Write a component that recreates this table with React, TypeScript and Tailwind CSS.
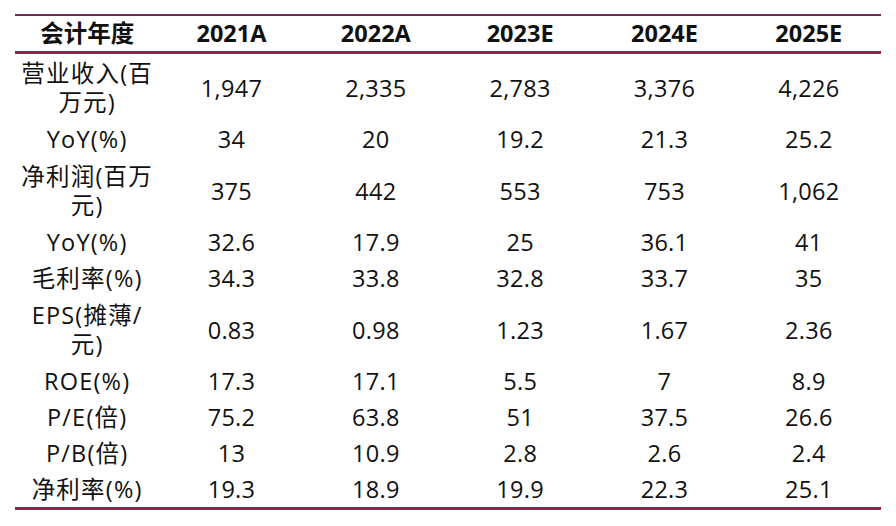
const header = ['会计年度', '2021A', '2022A', '2023E', '2024E', '2025E'];

const rows: { label: string[]; values: string[] }[] = [
  { label: ['营业收入(百', '万元)'], values: ['1,947', '2,335', '2,783', '3,376', '4,226'] },
  { label: ['YoY(%)'], values: ['34', '20', '19.2', '21.3', '25.2'] },
  { label: ['净利润(百万', '元)'], values: ['375', '442', '553', '753', '1,062'] },
  { label: ['YoY(%)'], values: ['32.6', '17.9', '25', '36.1', '41'] },
  { label: ['毛利率(%)'], values: ['34.3', '33.8', '32.8', '33.7', '35'] },
  { label: ['EPS(摊薄/', '元)'], values: ['0.83', '0.98', '1.23', '1.67', '2.36'] },
  { label: ['ROE(%)'], values: ['17.3', '17.1', '5.5', '7', '8.9'] },
  { label: ['P/E(倍)'], values: ['75.2', '63.8', '51', '37.5', '26.6'] },
  { label: ['P/B(倍)'], values: ['13', '10.9', '2.8', '2.6', '2.4'] },
  { label: ['净利率(%)'], values: ['19.3', '18.9', '19.9', '22.3', '25.1'] },
];

const App = () => {
  return (
    <div
      className="w-[896px] h-[526px] bg-white pt-[14px] pl-[15px] text-[#111] text-[23.5px]"
      style={{ fontFamily: '"Open Sans", "Noto Sans CJK SC", sans-serif' }}
    >
      <div className="w-[866px] border-t-2 border-t-[#74284a] border-b-[3px] border-b-[#9c1b47]">
        <div className="grid grid-cols-6 h-[38px] border-b-[3px] border-b-[#9c1b47] font-bold items-center">
          {header.map((h) => (
            <div key={h} className="text-center leading-[35px]">
              {h}
            </div>
          ))}
        </div>
        {rows.map((row, i) => (
          <div key={i} className={`grid grid-cols-6 items-center ${row.label.length > 1 ? 'h-[67px]' : 'h-[36px]'}`}>
            <div className="text-center leading-[29px] tracking-[1.2px]">
              {row.label.map((l, j) => (
                <div key={j}>{l}</div>
              ))}
            </div>
            {row.values.map((v, j) => (
              <div key={j} className="text-center leading-[30px] font-medium tracking-[0.3px]">
                {v}
              </div>
            ))}
          </div>
        ))}
      </div>
    </div>
  );
};

export default App;
